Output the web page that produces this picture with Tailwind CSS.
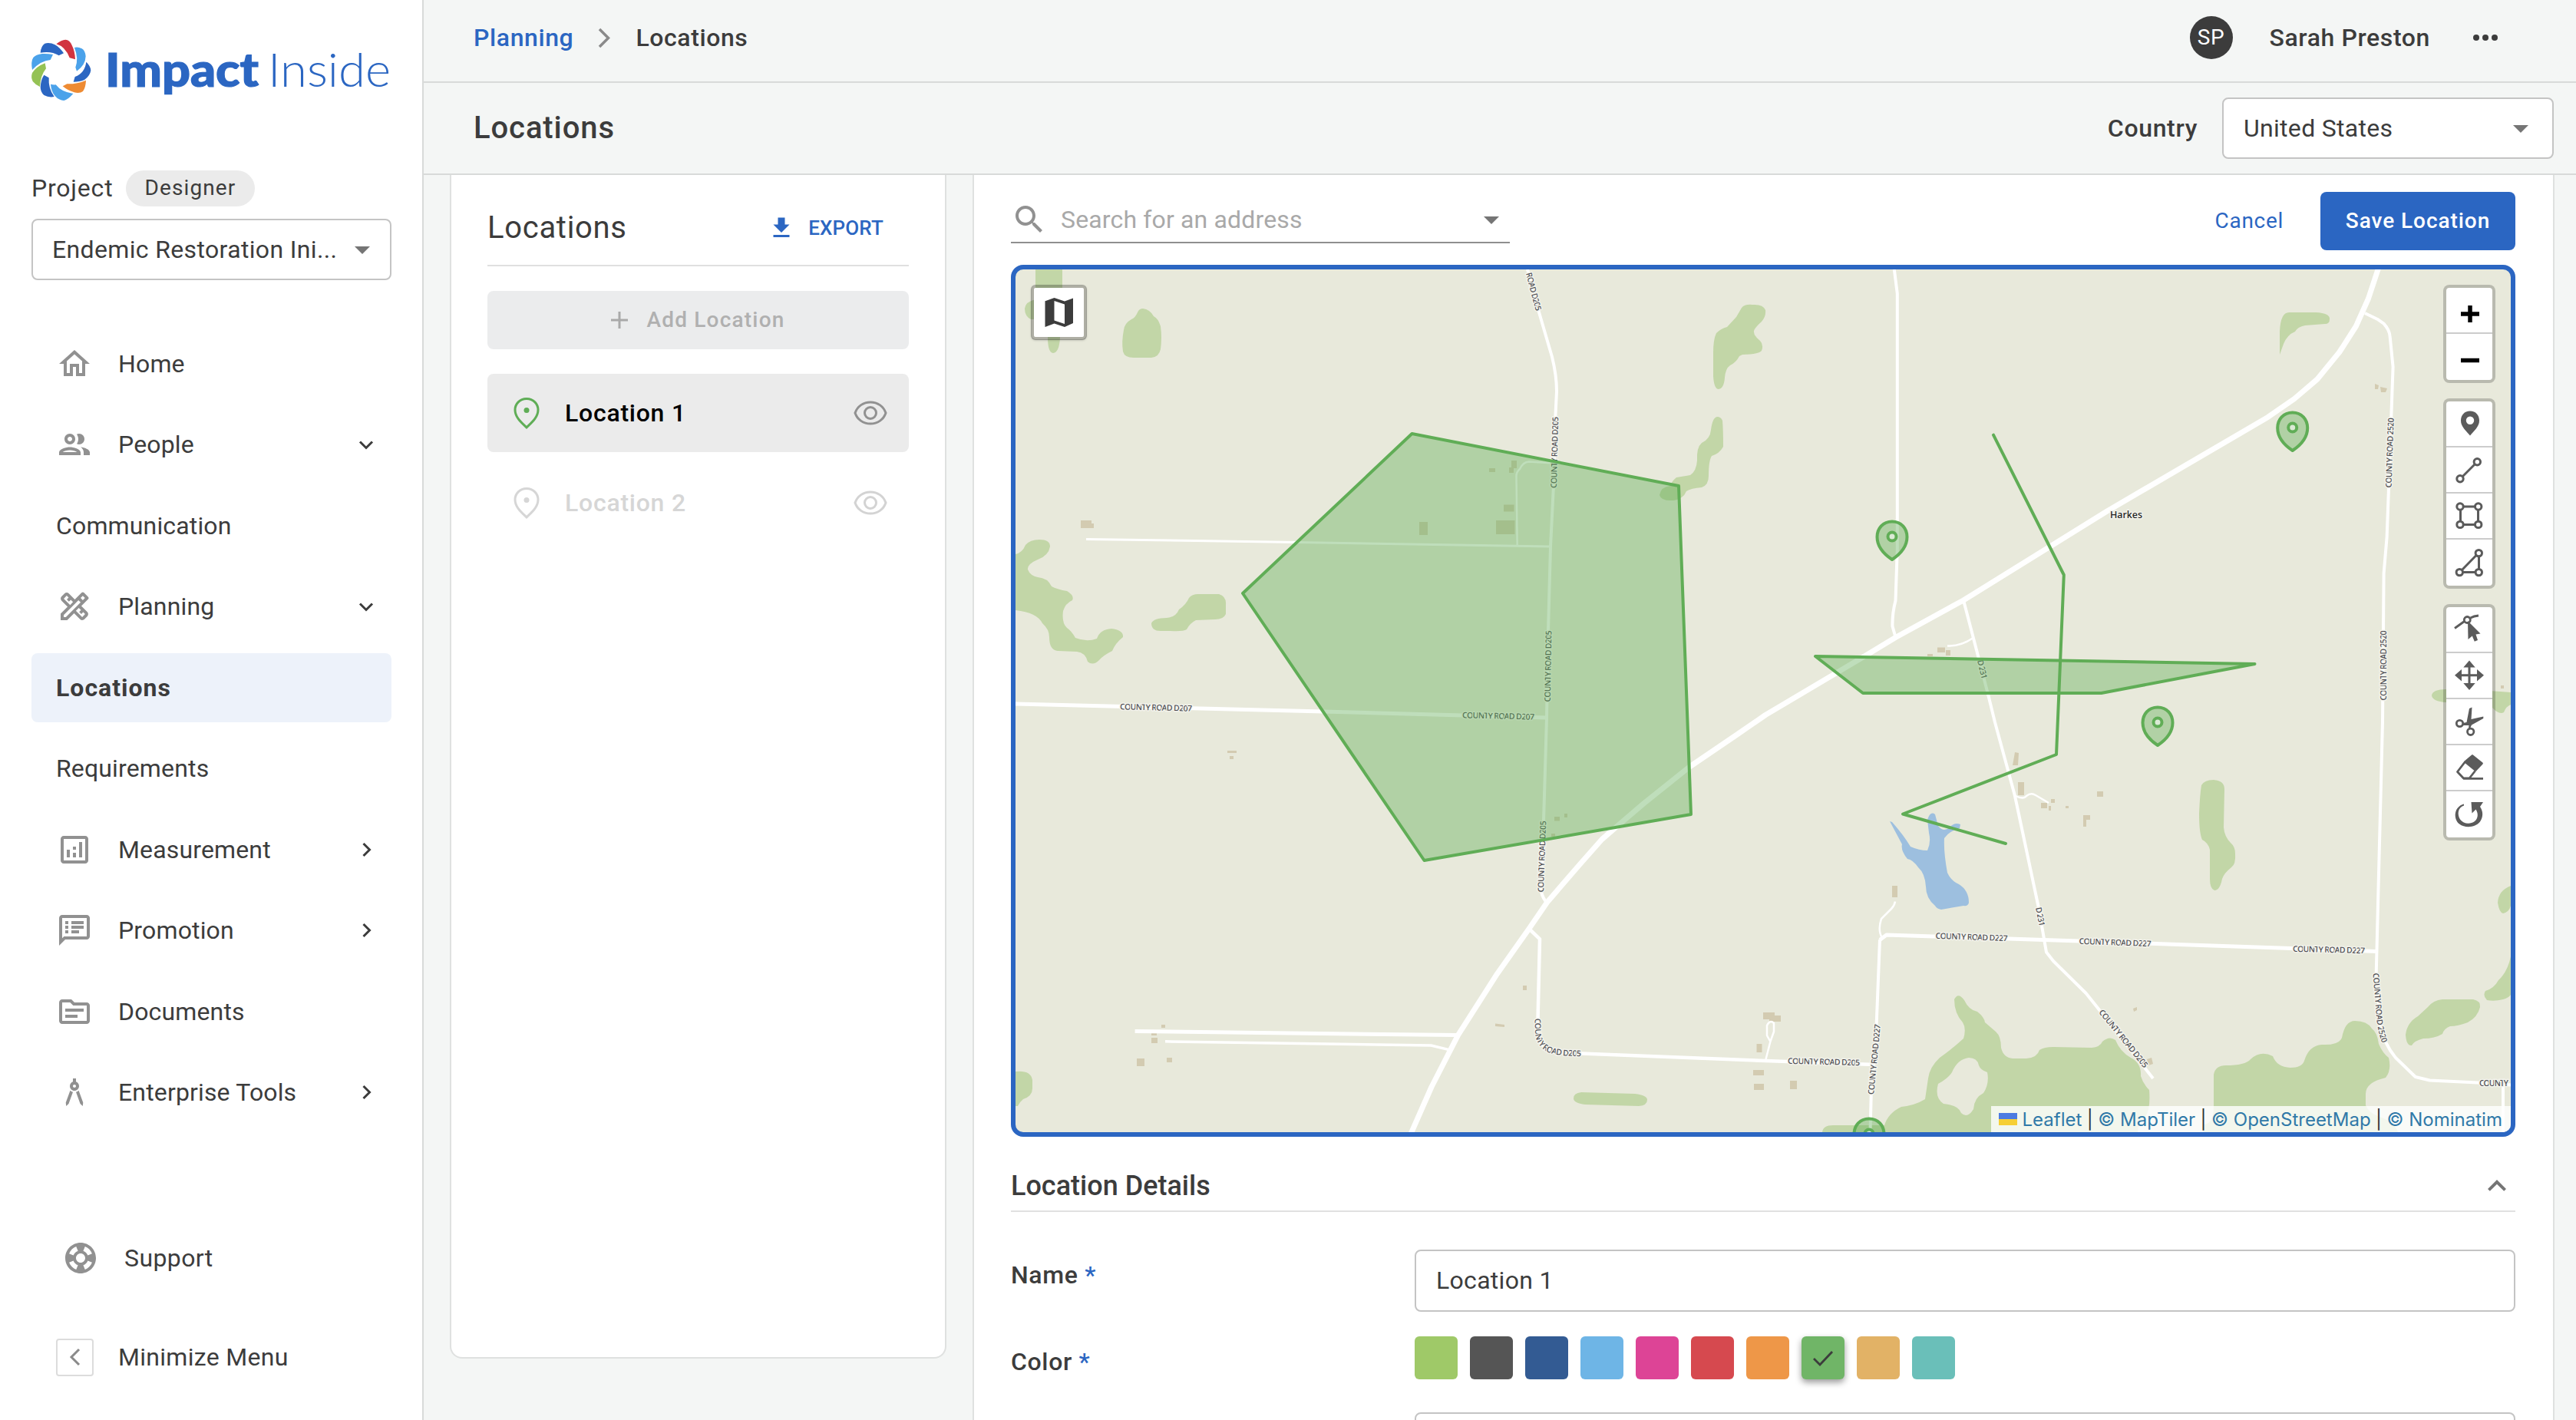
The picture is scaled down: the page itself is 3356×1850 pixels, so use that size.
<!DOCTYPE html>
<html lang="en">
<head>
<meta charset="utf-8">
<title>Locations</title>
<script src="https://cdn.jsdelivr.net/npm/@tailwindcss/browser@4"></script>
</head>
<body class="bg-white">
<div class="flex w-[3356px] h-[1850px] overflow-hidden font-['Roboto',sans-serif] text-[32px] leading-none tracking-[0.15px] text-[#3c3c3c]">

  <!-- Sidebar -->
  <aside class="w-[552px] h-full shrink-0 border-r-2 border-[#d8dad9] bg-white pl-[41px] pr-[40px] flex flex-col">
    <svg class="mt-[40px] h-[100px] w-[469px] shrink-0 overflow-visible tracking-normal" viewBox="41 40 469 100">
      <g transform="translate(30 40) scale(.33333)">
        <path fill="#d1343f" d="M130 52Q150 36 166 35Q182 36 190 55Q203 80 204 112L182 106Q165 62 130 52Z"/>
        <path fill="#4ba2ea" d="M201 66Q214 62 230 70Q243 78 245 100Q244 135 210 158L205 143Q218 110 201 66Z"/>
        <path fill="#2b66c2" d="M247 122Q264 138 265 155Q262 176 240 192Q222 200 197 200L203 180Q242 165 247 122Z"/>
        <path fill="#ee8b33" d="M155 217L172 208Q210 209 246 194Q245 222 234 237Q222 246 200 241Q175 234 155 217Z"/>
        <path fill="#4ba2ea" d="M108 209Q118 212 128 211Q150 240 196 246Q175 270 160 273Q140 272 125 255Q110 238 108 209Z"/>
        <path fill="#2b66c2" d="M82 173L101 184Q98 225 122 258Q100 262 82 252Q68 240 68 220Q70 190 82 173Z"/>
        <path fill="#95c255" d="M86 127L90 148Q68 175 66 219Q50 213 38 198Q30 182 36 165Q52 140 86 127Z"/>
        <path fill="#4ba2ea" d="M117 93L107 114Q70 117 36 153Q30 120 40 105Q50 93 75 90Q95 89 117 93Z"/>
        <path fill="#2b66c2" d="M68 86Q70 60 85 50Q105 45 125 55Q142 64 159 88L140 97Q110 78 68 86Z"/>
      </g>
      <text x="137" y="113" font-family="Lato" font-weight="900" font-size="61" fill="#2b66c2" stroke="#2b66c2" stroke-width="1.200" textLength="200" lengthAdjust="spacingAndGlyphs">Impact</text>
      <text x="349" y="113" font-family="Lato" font-weight="300" font-size="61" fill="#2b66c2" textLength="160" lengthAdjust="spacingAndGlyphs">Inside</text>
    </svg>

    <div class="mt-[81px] h-[48px] flex items-center shrink-0">
      <span class="w-[123px] tracking-[0.8px]">Project</span>
      <span class="h-[47px] w-[168px] rounded-full bg-[#ebebeb] flex items-center justify-center text-[28px] tracking-[1.1px]">Designer</span>
    </div>
    <div class="mt-[16px] h-[80px] shrink-0 border-2 border-[#c4c4c4] rounded-[8px] flex items-center justify-between pl-[25px] pr-[12px]">
      <span class="tracking-[0.35px]">Endemic Restoration Ini...</span>
      <svg class="size-12" viewBox="0 0 24 24" fill="#757575"><path d="M7 10l5 5 5-5z"/></svg>
    </div>

    <nav class="mt-[64px] flex flex-col gap-4 shrink-0">
      <a class="h-[89.5px] flex items-center pl-8 pr-[9px]"><svg class="size-12 mr-[33px]" viewBox="0 0 24 24" fill="#919191"><path d="M12 5.69l5 4.5V18h-2v-6H9v6H7v-7.81l5-4.5M12 3L2 12h3v8h6v-6h2v6h6v-8h3L12 3z"/></svg><span class="grow">Home</span></a>
      <a class="h-[89.5px] flex items-center pl-8 pr-[9px]"><svg class="size-12 mr-[33px]" viewBox="0 0 24 24" fill="#919191"><path d="M9 13.75c-2.34 0-7 1.17-7 3.5V19h14v-1.75c0-2.33-4.66-3.5-7-3.5zM4.34 17c.84-.58 2.87-1.25 4.66-1.25s3.82.67 4.66 1.25H4.34zM9 12c1.93 0 3.5-1.57 3.5-3.5S10.93 5 9 5 5.500 6.570 5.500 8.500 7.070 12 9 12zm0-5c.83 0 1.500.67 1.500 1.500S9.830 10 9 10s-1.500-.67-1.500-1.500S8.170 7 9 7zm7.040 6.810c1.160.84 1.960 1.960 1.960 3.440V19h4v-1.750c0-2.020-3.500-3.170-5.960-3.440zM15 12c1.930 0 3.500-1.570 3.500-3.500S16.930 5 15 5c-.54 0-1.040.13-1.500.35.63.89 1 1.980 1 3.150s-.37 2.260-1 3.150c.46.22.96.35 1.500.35z"/></svg><span class="grow">People</span><svg class="size-[48px]" viewBox="0 0 48 48" fill="none" stroke="#3c3c3c" stroke-width="3"><path d="M16 20.500l8 8 8-8"/></svg></a>
      <a class="h-[89.5px] flex items-center pl-8"><span>Communication</span></a>
      <a class="h-[89.5px] flex items-center pl-8 pr-[9px]"><svg class="size-12 mr-[33px]" viewBox="0 0 24 24" fill="#919191"><path d="M20.970 7.270c.39-.39.39-1.020 0-1.410l-2.830-2.830c-.39-.39-1.020-.39-1.410 0l-4.490 4.490-3.890-3.890c-.78-.78-2.050-.78-2.830 0l-1.900 1.900c-.78.78-.78 2.050 0 2.830l3.890 3.890L3 16.760V21h4.240l4.520-4.520 3.890 3.890c.95.95 2.230.6 2.830 0l1.900-1.900c.78-.78.78-2.050 0-2.830l-3.890-3.890 4.480-4.480zM5.040 6.940l1.890-1.900L8.200 6.310 7.020 7.500l1.410 1.410 1.190-1.190 1.450 1.450-1.900 1.900-4.130-4.130zm11.230 7.440l-1.190 1.190 1.410 1.410 1.190-1.190 1.270 1.270-1.900 1.900-4.120-4.120 1.900-1.900 1.440 1.440zM6.410 19H5v-1.410l9.610-9.610 1.410 1.410L6.410 19zm11.020-11.030l-1.410-1.410 1.410-1.410 1.410 1.410-1.410 1.410z"/></svg><span class="grow">Planning</span><svg class="size-[48px]" viewBox="0 0 48 48" fill="none" stroke="#3c3c3c" stroke-width="3"><path d="M16 20.500l8 8 8-8"/></svg></a>
      <a class="h-[89.5px] flex items-center pl-8 rounded-[8px] bg-[#edf2fa] font-bold tracking-[1px]"><span>Locations</span></a>
      <a class="h-[89.5px] flex items-center pl-8"><span>Requirements</span></a>
      <a class="h-[89.5px] flex items-center pl-8 pr-[9px]"><svg class="size-12 mr-[33px]" viewBox="0 0 24 24" fill="#919191"><path d="M19 3H5c-1.100 0-2 .9-2 2v14c0 1.100.9 2 2 2h14c1.100 0 2-.9 2-2V5c0-1.100-.9-2-2-2zm0 16H5V5h14v14zM7 12h2v5H7zM15 7h2v10h-2zM11 14h2v3h-2zM11 10h2v2h-2z"/></svg><span class="grow">Measurement</span><svg class="size-[48px]" viewBox="0 0 48 48" fill="none" stroke="#3c3c3c" stroke-width="3"><path d="M20.500 16l8 8-8 8"/></svg></a>
      <a class="h-[89.5px] flex items-center pl-8 pr-[9px]"><svg class="size-12 mr-[33px]" viewBox="0 0 24 24" fill="#919191"><path d="M20 2H4c-1.100 0-1.990.9-1.990 2L2 22l4-4h14c1.100 0 2-.9 2-2V4c0-1.100-.9-2-2-2zm0 14H5.170l-.59.590-.58.580V4h16v12zM6 12h2v2H6zM6 9h2v2H6zM6 6h2v2H6zM10 12h5v2h-5zM10 9h8v2h-8zM10 6h8v2h-8z"/></svg><span class="grow">Promotion</span><svg class="size-[48px]" viewBox="0 0 48 48" fill="none" stroke="#3c3c3c" stroke-width="3"><path d="M20.500 16l8 8-8 8"/></svg></a>
      <a class="h-[89.5px] flex items-center pl-8"><svg class="size-12 mr-[33px]" viewBox="0 0 24 24" fill="#919191"><path d="M20 6h-8l-2-2H4c-1.100 0-1.990.9-1.990 2L2 18c0 1.100.9 2 2 2h16c1.100 0 2-.9 2-2V8c0-1.100-.9-2-2-2zm0 12H4V6h5.170l2 2H20v10zM18 12H6v-2h12v2zM14 16H6v-2h8v2z"/></svg><span>Documents</span></a>
      <a class="h-[89.5px] flex items-center pl-8 pr-[9px]"><svg class="size-12 mr-[33px]" viewBox="0 0 24 24" fill="#919191"><path d="M6.360 18.780L6.610 21l1.620-1.540 2.770-7.600c-.68-.17-1.280-.51-1.770-.98l-2.870 7.900zM14.770 10.880c-.49.47-1.100.81-1.770.98l2.770 7.600L17.390 21l.25-2.220-2.870-7.900zM15 8c0-1.300-.84-2.400-2-2.820V3h-2v2.180C9.840 5.600 9 6.700 9 8c0 1.660 1.340 3 3 3s3-1.340 3-3zm-3 1c-.55 0-1-.45-1-1s.45-1 1-1 1 .45 1 1-.45 1-1 1z"/></svg><span class="grow">Enterprise Tools</span><svg class="size-[48px]" viewBox="0 0 48 48" fill="none" stroke="#3c3c3c" stroke-width="3"><path d="M20.500 16l8 8-8 8"/></svg></a>
    </nav>

    <div class="mt-[141px] h-[60px] flex items-center shrink-0 pl-[40px]">
      <svg class="size-12 mr-[33px]" viewBox="0 0 24 24" fill="#919191"><path d="M12 2C6.480 2 2 6.480 2 12s4.480 10 10 10 10-4.480 10-10S17.520 2 12 2zm7.460 7.120l-2.780 1.150c-.51-1.360-1.580-2.440-2.950-2.940l1.150-2.780c2.100.8 3.770 2.470 4.580 4.570zM12 15c-1.660 0-3-1.340-3-3s1.340-3 3-3 3 1.340 3 3-1.340 3-3 3zM9.130 4.540l1.170 2.780c-1.380.5-2.470 1.590-2.980 2.970L4.540 9.130c.81-2.110 2.480-3.780 4.590-4.590zM4.540 14.870l2.780-1.150c.51 1.380 1.590 2.460 2.970 2.960l-1.170 2.780c-2.100-.81-3.770-2.480-4.580-4.590zm10.340 4.590l-1.150-2.780c1.370-.51 2.450-1.590 2.950-2.970l2.780 1.170c-.81 2.100-2.480 3.770-4.580 4.580z"/></svg>
      <span class="tracking-[0.4px]">Support</span>
    </div>
    <div class="mt-[69px] h-[60px] flex items-center shrink-0 pl-[32px]">
      <span class="size-[49px] border-2 border-[#dcdcdc] rounded-[4px] flex items-center justify-center mr-[32px]"><svg class="size-[40px]" viewBox="0 0 40 40" fill="none" stroke="#8a8a8a" stroke-width="3"><path d="M25 10l-10 10 10 10"/></svg></span>
      <span class="tracking-[0.3px]">Minimize Menu</span>
    </div>
  </aside>

  <main class="grow h-full bg-[#f4f6f5] flex flex-col">
    <!-- Top bar -->
    <header class="h-[108px] shrink-0 border-b-2 border-[#d8dad9] flex items-center justify-between pl-[65px] pr-[93px] pb-[8px] font-medium tracking-[0.6px]">
      <div class="flex items-center">
        <span class="text-[#2b66c2]">Planning</span>
        <svg class="w-[36px] h-[48px] ml-[23px] mr-[22px]" viewBox="0 0 36 48" fill="none" stroke="#8a8a8a" stroke-width="3.500"><path d="M11 13l11.500 11.500L11 36"/></svg>
        <span>Locations</span>
      </div>
      <div class="flex items-center">
        <span class="size-[56px] rounded-full bg-[#3c3c3c] text-white text-[28px] font-normal flex items-center justify-center mr-[48px]">SP</span>
        <span class="mr-[43px]">Sarah Preston</span>
        <svg class="w-[54px] h-[10px]" viewBox="-10 0 54 10" fill="#3c3c3c"><circle cx="7" cy="5" r="4"/><circle cx="19" cy="5" r="4"/><circle cx="31" cy="5" r="4"/></svg>
      </div>
    </header>

    <div class="h-[120px] shrink-0 border-b-2 border-[#d8dad9] flex items-center justify-between pl-[65px] pr-[29px] font-medium">
      <h1 class="text-[40px] tracking-[0.9px]">Locations</h1>
      <div class="flex items-center">
        <span class="mr-[32px] tracking-[0.65px]">Country</span>
        <div class="w-[432px] h-[80px] rounded-[8px] border-2 border-[#c4c4c4] bg-white flex items-center justify-between pl-[26px] pr-[17px] font-normal">
          <span class="tracking-[0.3px]">United States</span>
          <svg class="size-12" viewBox="0 0 24 24" fill="#757575"><path d="M7 10l5 5 5-5z"/></svg>
        </div>
      </div>
    </div>

    <div class="grow flex items-start pl-[34px] gap-[34px] overflow-hidden">
      <!-- Location list -->
      <section class="w-[647px] h-[1542px] shrink-0 border-2 border-t-0 border-[#dfe1e0] rounded-b-[16px] bg-white px-[47px]">
        <div class="h-[119px] border-b-2 border-[#e0e0e0] pt-[20px] flex items-center justify-between pr-[33px]">
          <h2 class="text-[40px] font-[450] tracking-[0.7px]">Locations</h2>
          <span class="flex items-center text-[26px] font-medium text-[#2b66c2] gap-[17px]"><svg class="size-9" viewBox="0 0 24 24" fill="#2b66c2"><path d="M5 20h14v-2H5v2zM19 9h-4V3H9v6H5l7 7 7-7z"/></svg><span>EXPORT</span></span>
        </div>
        <button class="mt-[32px] h-[76px] w-full rounded-[8px] bg-[#ebeced] text-[#b0b0b0] text-[28px] font-medium flex items-center justify-center tracking-[1.2px]">
          <svg class="size-[22px] mr-[24px]" viewBox="0 0 22 22" stroke="#a9a9a9" stroke-width="3"><path d="M11 0v22M0 11h22"/></svg>Add Location
        </button>
        <div class="mt-[32px] h-[102px] rounded-[8px] bg-[#ebebeb] text-black font-medium flex items-center pl-[27px] pr-[26px]">
          <svg class="size-12 mr-[26px]" viewBox="0 0 48 48" fill="none" stroke="#5fad56" stroke-width="3"><path d="M24 5.500C15 5.500 9 12.300 9 20c0 10 9 17 15 23 6-6 15-13 15-23 0-7.700-6-14.500-15-14.500z"/><circle cx="24" cy="20.500" r="3.500" fill="#5fad56" stroke="none"/></svg>
          <span class="grow tracking-[0.75px]">Location 1</span>
          <svg class="size-12" viewBox="0 0 48 48" fill="none" stroke="#919191" stroke-width="3"><path d="M4 24C7 15 15 10 24 10S41 15 44 24C41 33 33 38 24 38S7 33 4 24Z"/><circle cx="24" cy="24" r="7.500"/></svg>
        </div>
        <div class="mt-[15px] h-[102px] text-[#d6d6d6] font-medium flex items-center pl-[27px] pr-[26px]">
          <svg class="size-12 mr-[26px]" viewBox="0 0 48 48" fill="none" stroke="#d6d6d6" stroke-width="3"><path d="M24 5.500C15 5.500 9 12.300 9 20c0 10 9 17 15 23 6-6 15-13 15-23 0-7.700-6-14.500-15-14.500z"/><circle cx="24" cy="20.500" r="3.500" fill="#d6d6d6" stroke="none"/></svg>
          <span class="grow tracking-[0.75px]">Location 2</span>
          <svg class="size-12" viewBox="0 0 48 48" fill="none" stroke="#d3d3d3" stroke-width="3"><path d="M4 24C7 15 15 10 24 10S41 15 44 24C41 33 33 38 24 38S7 33 4 24Z"/><circle cx="24" cy="24" r="7.500"/></svg>
        </div>
      </section>

      <!-- Editor -->
      <section class="w-[2061px] h-[1700px] shrink-0 border-x-2 border-[#dfe1e0] bg-white pl-[48px] pr-[49px]">
        <div class="h-[117px] flex items-start justify-between">
          <div class="mt-[28px] w-[650px] h-[61px] border-b-2 border-[#8f8f8f] flex items-center">
            <svg class="size-12 mr-[17px]" viewBox="0 0 24 24" fill="#919191"><path d="M15.500 14h-.79l-.28-.27C15.410 12.590 16 11.110 16 9.500 16 5.910 13.090 3 9.500 3S3 5.910 3 9.500 5.910 16 9.500 16c1.610 0 3.090-.59 4.230-1.570l.27.28v.79l5 4.990L20.490 19l-4.990-5zm-6 0C7.010 14 5 11.990 5 9.500S7.010 5 9.500 5 14 7.010 14 9.500 11.990 14 9.500 14z"/></svg>
            <span class="grow text-[#a9a9a9]">Search for an address</span>
            <svg class="size-12" viewBox="0 0 24 24" fill="#757575"><path d="M7 10l5 5 5-5z"/></svg>
          </div>
          <div class="mt-[22px] flex items-center">
            <span class="text-[28px] text-[#2b66c2] mr-[48px] tracking-[0.7px]">Cancel</span>
            <button class="w-[254px] h-[76px] rounded-[8px] bg-[#2b66c2] text-white text-[28px] font-medium tracking-[0.95px]">Save Location</button>
          </div>
        </div>

        <div class="relative h-[1136px] w-[1960px] rounded-[16px] border-[6px] border-[#2b66c2] overflow-hidden bg-[#e8e9db]">
          <svg class="block w-[1948px] h-[1124px] tracking-normal" viewBox="1323 351 1948 1124">
            <!-- woodland -->
            <g fill="#c2d6a7">
              <path d="M1349 351H1384V380L1381 440Q1380 459 1372 460Q1365 459 1365 440V416H1343Q1335 412 1335 402Q1336 393 1349 390Z"/>
              <path d="M1489 402Q1484 402 1482 407Q1479 414 1474 416Q1465 421 1464 430Q1461 445 1463 458Q1465 466 1477 466H1500Q1510 465 1512 455Q1514 440 1512 425Q1509 415 1503 412Q1498 403 1489 402Z"/>
              <path d="M2283 397Q2273 396 2269 401L2262 413L2250 426Q2242 428 2236 434Q2232 442 2232 460V490Q2233 507 2239 507Q2246 506 2247 492Q2248 480 2254 476Q2262 472 2266 464L2270 462Q2290 462 2295 457Q2298 449 2293 444Q2284 437 2285 431Q2287 426 2295 419Q2301 412 2300 404Q2297 396 2283 397Z"/>
              <path d="M2237 543Q2231 544 2229 560Q2228 572 2217 577Q2210 583 2211 600Q2210 614 2202 619Q2190 621 2184 622Q2177 628 2176 633Q2164 634 2162 645Q2164 653 2180 652Q2193 650 2197 640Q2203 636 2217 635Q2226 632 2226 620Q2226 600 2230 594Q2240 591 2245 582Q2245 560 2244 548Q2242 543 2237 543Z"/>
              <path d="M1323 722Q1332 720 1336 710Q1342 703 1354 703Q1368 703 1368 712Q1366 724 1352 729Q1338 735 1339 742Q1342 750 1352 752Q1365 753 1370 764Q1378 768 1390 770Q1400 776 1397 782Q1388 786 1385 796Q1383 812 1390 818Q1396 822 1401 831Q1416 837 1429 832Q1433 820 1448 819Q1464 821 1463 830Q1453 838 1449 848Q1437 854 1432 860Q1424 868 1417 862Q1414 850 1403 849L1378 848Q1367 847 1367 830Q1367 820 1358 812Q1351 798 1323 795Z"/>
              <path d="M1561 774H1588Q1598 777 1597 788V800Q1594 807 1583 807L1558 808Q1550 812 1546 820Q1541 823 1525 822H1512Q1500 822 1500 812Q1503 805 1520 805Q1532 804 1536 794Q1545 788 1549 779Q1553 774 1561 774Z"/>
              <path d="M1323 1396Q1343 1394 1345 1407V1418Q1345 1428 1333 1432Q1328 1436 1326 1441H1323Z"/>
              <path d="M2060 1423L2130 1425Q2146 1427 2146 1433Q2146 1440 2135 1441L2065 1439Q2050 1437 2050 1431Q2050 1424 2060 1423Z"/>
              <path d="M2970 462V432Q2971 406 2983 407H3017Q3036 408 3035 416Q3035 422 3029 422L3003 424Q2993 426 2990 432Q2980 436 2975 448Z"/>
              <path d="M2884 1016Q2898 1017 2898 1028L2897 1078Q2898 1090 2906 1098Q2912 1103 2912 1112Q2913 1126 2907 1130Q2897 1138 2895 1145Q2892 1160 2885 1160Q2879 1158 2879 1145V1107Q2877 1098 2869 1094Q2865 1085 2865 1060Q2866 1035 2868 1023Q2872 1016 2884 1016Z"/>
              <path d="M3187 898Q3169 898 3168 906Q3169 914 3187 915L3246 921Q3256 932 3262 928Q3265 920 3271 918V902L3230 899Z"/>
              <path d="M3271 1154Q3255 1160 3254 1176Q3256 1189 3261 1190Q3269 1188 3271 1180Z"/>
              <path d="M3271 1246Q3267 1266 3255 1277Q3249 1288 3238 1291Q3234 1297 3240 1303Q3250 1305 3261 1302Q3268 1300 3271 1296Z"/>
              <path d="M3182 1302H3222Q3232 1304 3231 1312Q3228 1325 3215 1332Q3202 1337 3192 1337Q3184 1340 3182 1347Q3172 1353 3157 1353Q3145 1356 3142 1362Q3135 1363 3134 1348Q3136 1332 3150 1324L3163 1312Q3170 1303 3182 1302Z"/>
              <path fill-rule="evenodd" d="M2374 1475Q2375 1466 2388 1466H2412L2455 1466Q2460 1450 2477 1442Q2495 1440 2508 1432L2512 1405Q2514 1390 2527 1378Q2545 1365 2558 1353Q2562 1340 2557 1332Q2546 1320 2546 1302Q2551 1292 2559 1303Q2565 1316 2576 1318Q2585 1325 2586 1332L2600 1344Q2607 1350 2607 1365Q2610 1378 2622 1379H2640Q2654 1378 2657 1368Q2663 1364 2675 1364L2725 1365Q2736 1364 2739 1357Q2748 1349 2756 1355Q2762 1370 2776 1378Q2790 1385 2789 1402Q2792 1412 2800 1420Q2802 1445 2795 1455Q2786 1458 2785 1475ZM2565 1378Q2576 1378 2578 1388Q2580 1394 2589 1397Q2592 1412 2584 1424Q2572 1430 2571 1445Q2563 1458 2555 1450Q2552 1440 2532 1438Q2520 1430 2525 1412Q2538 1405 2543 1397Q2550 1380 2565 1378Z"/>
              <path d="M2870 1475V1465Q2884 1465 2884 1441V1400Q2886 1388 2900 1388Q2925 1388 2932 1380Q2945 1368 2961 1376Q2966 1390 2984 1391Q2999 1391 3002 1382Q3008 1362 3025 1361Q3047 1362 3051 1352Q3055 1330 3068 1330Q3084 1330 3090 1340Q3097 1345 3099 1360Q3104 1372 3112 1378Q3116 1394 3108 1404Q3082 1410 3082 1425V1440Q3086 1450 3100 1455Q3120 1462 3124 1475Z"/>
            </g>
            <path fill="#9dbfdf" d="M2462 1070L2465 1071Q2480 1088 2489 1103Q2500 1108 2511 1108Q2516 1098 2513 1085L2511 1068Q2515 1056 2521 1061L2525 1076Q2532 1085 2540 1078Q2546 1071 2554 1074L2553 1079Q2540 1082 2533 1092Q2532 1110 2537 1137Q2542 1148 2552 1152Q2565 1160 2565 1176Q2564 1181 2558 1180L2529 1185Q2523 1184 2521 1180Q2509 1170 2509 1155Q2508 1138 2499 1130Q2492 1120 2485 1119Q2476 1108 2478 1100Q2470 1085 2462 1070Z"/>
            <!-- buildings -->
            <g fill="#d3cbb1">
              <path d="M1408 678h14v4h3v6h-17zM1940 610h8v5h-8zM1969 600h7v10h-4v6h-6v-7h3zM1959 657.500h13.500v9H1959zM1849 680h11v17h-11zM1949 678h24.500v18H1949zM1599 978h12v3h-12zM1602 985h5v4h-5zM2025 1064h7v5.500h-7zM2038 1060h4v5h-4zM2021 1086h5v4h-5zM1984 1284h5v6h-5zM1948 1333.500l12 1.500v3l-12-1zM1513 1335h5v4h-5zM1500 1344h7v5h-7zM1500 1352h8v7h-8zM1481 1379h10v10h-10zM1520 1378h7v6h-7zM2297 1319h15v4h8v8h-15v-3h-8zM2288.500 1360h7v11h-7zM2284 1394h14v7h-14zM2285 1412h13v8h-13zM2332 1408h9v11h-9zM2465 1154h7v15h-7zM2625 980l5 1-1 16h-7zM2629 1019h8v17h-8zM2659 1046h8v7h-8zM2672 1041h5v5h-5zM2669 1050h3v6h-3zM2691 1050h4v3h-4zM2732 1031h8v7h-8zM2714 1062h9v6h-5v9h-4zM2779 1314l5-2v4l-4 2zM2797 1380l6-2 2 8-6 2zM3094 500l5 2-1 5h-4zM3101 504l9 2-2 5h-6zM2524 843.500h10v6.500h-10zM2535 847h6v7h-6zM2511 852h7v3h-7zM3258 893h4v4h-4z"/>
            </g>
            <!-- roads -->
            <g fill="none" stroke="#fff" stroke-linejoin="round">
              <path stroke-width="3" d="M1415 702.500L1689 706.500 2019 712"/>
              <path stroke-width="2.500" d="M1976.700 711L1975.500 622Q1975 615 1980 611 1984 602 1992 601.500L2025 603.500M2570.600 831Q2555 842 2537 841.500M2626 1037Q2636 1042 2640 1037 2646 1032 2652 1036L2669 1046M2469 1174.500Q2468 1180 2464 1184L2451 1197Q2446 1212 2452 1222M2300.500 1380L2306.400 1357 2311 1344V1333Q2306 1328 2302 1336V1349L2306.400 1357"/>
              <path stroke-width="4" d="M1990 351L2004.700 405.700 2022 465Q2028 489 2028 510L2026.400 542 2024 632 2020 712 2017 822 2015 935 2011 1070 2008 1162Q2010 1171 2015.600 1176"/>
              <path stroke-width="5" d="M1323 917L1724 927 2015 935M1478.600 1343.500L1899.500 1348.600"/>
              <path stroke-width="3.500" d="M1518 1356.800L1864.400 1362 1886.700 1367.400"/>
              <path stroke-width="4.500" d="M1992 1210L2006 1223.400 2003.500 1329Q2003 1352 2006 1357 2015 1371 2035 1371.500L2300 1382 2442.400 1387"/>
              <path stroke-width="4" d="M2467.800 351L2471.800 382.500V715L2469.500 782.600Q2465 800 2465.500 816L2469.500 830M2558 782L2570.600 830 2590 904.400 2599 941 2624.800 1036 2656 1183 2666 1240.600 2675 1252 2717.600 1294 2737.600 1319 2805 1405"/>
              <path stroke-width="4" d="M3081 408L3097 415.700 3105.600 421.600Q3113 430 3113.600 438L3117.600 478 3115.300 543 3112 636 3109.600 700 3105.600 747 3105 822 3104 940 3095.700 1269 3101 1336Q3106 1360 3121 1378L3146.800 1403 3165.400 1407.500 3228 1410.500 3271 1413.500M3261 1413V1475"/>
              <path stroke-width="5" d="M3095.700 1239.400L2709 1226 2457.700 1218 2449 1224.500"/>
              <path stroke-width="4" d="M2449 1224L2443.700 1359 2437.800 1424 2436.500 1475"/>
              <path stroke-width="7" d="M1836 1482L1839 1475 1865 1416 1899.500 1348.600 1950.500 1268.700 1992 1210 2015.600 1175.600Q2050 1135 2087 1093.500L2106.800 1076.400 2141.800 1046.500 2200.500 999.500 2263 957 2300 931.500 2429 855 2469.500 830.500 2558 782 2745 666 2954.600 543.400 2989 519.700 3019 494 3047.600 459 3069.400 425 3085.500 389 3100 345"/>
            </g>
            <!-- road labels -->
            <g font-family="'Noto Sans','Open Sans',sans-serif" font-size="10.500" font-weight="500" fill="#4c4c52" stroke="#f3f3ec" stroke-width="3" paint-order="stroke" stroke-linejoin="round" text-anchor="middle">
              <defs>
                <path id="r205" d="M1999.500 1327L2000 1345Q2001 1360 2012 1368 2020 1374 2040 1375.500L2075 1377"/>
                <path id="r205d" d="M2734 1319L2800 1400"/>
                <path id="r2520" d="M3091.500 1268L3096.500 1330Q3099 1350 3106 1364L3112 1374"/>
              </defs>
              <text transform="translate(1506 925.500) rotate(1.500)" textLength="94">COUNTY ROAD D207</text>
              <text transform="translate(1952 936.500) rotate(1.500)" textLength="94">COUNTY ROAD D207</text>
              <text transform="translate(2029 589.500) rotate(-88.500)" textLength="93">COUNTY ROAD D205</text>
              <text transform="translate(2020.500 868) rotate(-89)" textLength="93">COUNTY ROAD D205</text>
              <text transform="translate(2012.500 1116) rotate(-88)" textLength="93">COUNTY ROAD D205</text>
              <text transform="translate(1994.500 381) rotate(75)" textLength="51">ROAD D205</text>
              <text text-anchor="start" textLength="94"><textPath href="#r205">COUNTY ROAD D205</textPath></text>
              <text transform="translate(2376 1387) rotate(1.500)" textLength="94">COUNTY ROAD D205</text>
              <text transform="translate(2445.500 1380.500) rotate(-84.500)" textLength="92">COUNTY ROAD D227</text>
              <text transform="translate(2568.500 1224.500) rotate(2)" textLength="94">COUNTY ROAD D227</text>
              <text transform="translate(2755.500 1231.500) rotate(2)" textLength="94">COUNTY ROAD D227</text>
              <text transform="translate(3034 1241) rotate(1.500)" textLength="94">COUNTY ROAD D227</text>
              <text transform="translate(2654.500 1195) rotate(79)" textLength="25">D 231</text>
              <text transform="translate(2579 873) rotate(76)" textLength="25">D 231</text>
              <text transform="translate(3117 590) rotate(-88)" textLength="91">COUNTY ROAD 2520</text>
              <text transform="translate(3108.500 867) rotate(-90)" textLength="91">COUNTY ROAD 2520</text>
              <text text-anchor="start" textLength="92"><textPath href="#r2520">COUNTY ROAD 2520</textPath></text>
              <text text-anchor="start" textLength="94"><textPath href="#r205d">COUNTY ROAD D205</textPath></text>
              <text x="3249" y="1415" textLength="38">COUNTY</text>
              <text x="2770" y="675" font-size="13" fill="#222" textLength="42" lengthAdjust="spacingAndGlyphs">Harkes</text>
            </g>
            <!-- drawn shapes -->
            <g stroke="#60ad56" stroke-width="4" stroke-linejoin="round" stroke-linecap="round" fill="#60ad56" fill-opacity=".4">
              <path d="M1839.500 565L2187 633 2203 1061 1855.500 1121 1619 773Z"/>
              <path d="M2365 855L2937.500 865 2737.600 903H2427Z"/>
              <path fill="none" d="M2597 566.700L2688.800 749 2679 983 2479 1060.500 2613 1099"/>
              <g id="pin"><path d="M2465 679.500C2453 679.500 2445.500 688.500 2445.500 699.500C2445.500 713 2456 723 2465 729C2474 723 2484.500 713 2484.500 699.500C2484.500 688.500 2477 679.500 2465 679.500Z"/><circle cx="2465" cy="699" r="5.500" fill="#fff" fill-opacity=".55"/></g>
              <use href="#pin" x="521.700" y="-142"/>
              <use href="#pin" x="346" y="242"/>
              <use href="#pin" x="-30" y="778"/>
            </g>
          </svg>

          <div class="absolute left-[20px] top-[20px] w-[73px] h-[72px] rounded-[6px] border-4 border-black/25 bg-white bg-clip-padding shadow-sm flex items-center justify-center">
            <svg class="size-[48px]" viewBox="0 0 48 48"><path fill="#3c3c3c" d="M5 9.500L17.500 5 31 9.500 42 5.500V38L31 43 17.500 38.500 5.500 43V9.500ZM17.500 9V34.500L31 39V13.500Z" fill-rule="evenodd"/></svg>
          </div>

          <div class="absolute right-[20px] top-[20px] flex flex-col gap-5">
            <div class="w-[68px] rounded-[8px] border-4 border-black/20 bg-white bg-clip-padding flex flex-col">
              <svg class="w-[60px] h-[60px] border-b-2 border-[#ccc]" viewBox="0 0 60 58"><path d="M19 34h24M31 23v22" stroke="#000" stroke-width="5.500"/></svg>
              <svg class="w-[60px] h-[60px]" viewBox="0 0 60 60"><path d="M19 34.500h24" stroke="#000" stroke-width="5.500"/></svg>
            </div>
            <div class="w-[68px] rounded-[8px] border-4 border-black/20 bg-white bg-clip-padding flex flex-col text-[#5b5b5b]">
              <svg class="w-[60px] h-[60px] border-b-2 border-[#ccc]" viewBox="0 0 60 58" fill="currentColor"><path fill-rule="evenodd" d="M31 12.500C23.500 12.500 19 18 19 25C19 33 26 38.500 31 44.500C36 38.500 43 33 43 25C43 18 38.500 12.500 31 12.500ZM31 19.500a5.200 5.200 0 1 1 0 10.400a5.200 5.200 0 1 1 0-10.400Z"/></svg>
              <svg class="w-[60px] h-[60px] border-b-2 border-[#ccc]" viewBox="0 0 60 58" fill="none" stroke="currentColor" stroke-width="3"><path d="M21 38l16.500-16.500"/><circle cx="18" cy="40.700" r="4.200"/><circle cx="40.300" cy="18.700" r="4.200"/></svg>
              <svg class="w-[60px] h-[60px] border-b-2 border-[#ccc]" viewBox="0 0 60 58" fill="none" stroke="currentColor" stroke-width="3"><path d="M22 17h16M22 40.500h16M18.500 21v15.500M41.500 21v15.500"/><circle cx="18" cy="17" r="4.200"/><circle cx="41.700" cy="17" r="4.200"/><circle cx="18" cy="40.400" r="4.200"/><circle cx="41.700" cy="40.400" r="4.200"/></svg>
              <svg class="w-[60px] h-[60px]" viewBox="0 0 60 60" fill="none" stroke="currentColor" stroke-width="3"><path d="M20.500 39.500l18.500-19M42.500 22v16.500M21.500 42.600h16.500"/><circle cx="17.300" cy="42.600" r="4.200"/><circle cx="42.300" cy="17.600" r="4.200"/><circle cx="42.300" cy="42.600" r="4.200"/></svg>
            </div>
            <div class="w-[68px] rounded-[8px] border-4 border-black/20 bg-white bg-clip-padding flex flex-col text-[#5b5b5b]">
              <svg class="w-[60px] h-[60px] border-b-2 border-[#ccc]" viewBox="0 0 60 58" fill="none" stroke="currentColor" stroke-width="2.800"><path d="M11 27.500L23.500 18.500M31.500 14Q36 11.500 42 11"/><circle cx="27.300" cy="16.500" r="4"/><path fill="currentColor" stroke="none" d="M28 18L44.500 34.500 38.500 35.500 41 43 36.800 44.800 33.800 37.500 28.500 42Z"/></svg>
              <svg class="w-[60px] h-[60px] border-b-2 border-[#ccc]" viewBox="0 0 60 58" fill="currentColor"><path d="M30 9.500l7.700 9h-6.200v8.800h8.500v-6.200l9 7.700-9 7.700v-6.200h-8.500v8.800h6.200L30 48l-7.700-9h6.200v-8.700h-8.500v6.200l-9-7.700 9-7.700v6.200h8.500v-8.800h-6.200z"/></svg>
              <svg class="w-[60px] h-[60px] border-b-2 border-[#ccc]" viewBox="0 0 60 58" fill="none" stroke="currentColor" stroke-width="2.800"><circle cx="17.500" cy="31.500" r="4.200"/><circle cx="31.700" cy="42.300" r="4.200"/><path fill="currentColor" stroke="none" d="M33.500 10.500L32.500 26 48.300 22.500V25L33 33.500 31 38H29L29.500 34H21.500V31L26.500 30 30 12Z"/></svg>
              <svg class="w-[60px] h-[60px] border-b-2 border-[#ccc]" viewBox="0 0 60 58" fill="none" stroke="currentColor" stroke-width="2.800" stroke-linejoin="round"><path d="M24.500 21.500L14.500 34.500 22.500 43H30L37.500 33.500M22 43.300H48"/><path fill="currentColor" d="M24.500 21.500L34 13.500 46.500 23.500 38 32.500Z"/></svg>
              <svg class="w-[60px] h-[60px]" viewBox="0 0 60 60" fill="currentColor"><path d="M23 16.500C9.500 20 9 36 17 42.500C25 48.500 38 47 44 39.500C48.500 33 48 26 44 20L48 14H32.500L33.500 28.500L38.500 23.500C42 29 41.500 35 37 39C31 43.500 22.500 42.500 18 36.500C14 30 15 21 23 18.500Z"/></svg>
            </div>
          </div>

          <div class="absolute right-0 bottom-0 h-[34px] w-[677px] bg-white/80 flex items-center justify-between pl-[10px] pr-[11px] pt-[2px] font-['Inter',sans-serif] text-[24px] tracking-normal text-[#3079a8] whitespace-nowrap">
            <svg class="w-[24px] h-[16px] shrink-0 -mt-[2px]" viewBox="0 0 24 16"><path fill="#4c7be1" d="M0 0h24v8H0z"/><path fill="#f6cf35" d="M0 8h24v8H0z"/></svg>
            <span>Leaflet</span><span class="text-[#333]">|</span><span>© MapTiler</span><span class="text-[#333]">|</span><span>© OpenStreetMap</span><span class="text-[#333]">|</span><span>© Nominatim</span>
          </div>
        </div>

        <div class="mt-[27px] h-[71px] border-b-2 border-[#e0e0e0] flex items-center justify-between pt-[4px]">
          <h3 class="text-[36px] font-medium tracking-[0px]">Location Details</h3>
          <svg class="size-12" viewBox="0 0 24 24" fill="#757575"><path d="M12 8l-6 6 1.410 1.410L12 10.830l4.590 4.580L18 14z"/></svg>
        </div>
        <div class="mt-[49px] flex">
          <div class="w-[526px] pt-[17px] font-medium tracking-[0.65px]">Name <span class="text-[#2b66c2]">*</span></div>
          <div class="grow h-[81px] border-2 border-[#c4c4c4] rounded-[8px] flex items-center pl-[26px] pb-px tracking-[0.3px]">Location 1</div>
        </div>
        <div class="mt-[32px] h-[56px] flex">
          <div class="w-[526px] pt-[17px] font-medium tracking-[0.65px]">Color <span class="text-[#2b66c2]">*</span></div>
          <div class="flex gap-4">
            <span class="size-[56px] rounded-[6px] bg-[#9fc968]"></span>
            <span class="size-[56px] rounded-[6px] bg-[#555555]"></span>
            <span class="size-[56px] rounded-[6px] bg-[#335b93]"></span>
            <span class="size-[56px] rounded-[6px] bg-[#6eb5e6]"></span>
            <span class="size-[56px] rounded-[6px] bg-[#dd4496]"></span>
            <span class="size-[56px] rounded-[6px] bg-[#d6494f]"></span>
            <span class="size-[56px] rounded-[6px] bg-[#ee9748]"></span>
            <span class="size-[56px] rounded-[6px] bg-[#70b567] shadow-[0_4px_8px_rgba(0,0,0,0.4)] flex items-center justify-center"><svg class="size-[32px]" viewBox="0 0 32 32" fill="none" stroke="#3c3c3c" stroke-width="2.800"><path d="M4 17l8 8L28 8"/></svg></span>
            <span class="size-[56px] rounded-[6px] bg-[#e2b266]"></span>
            <span class="size-[56px] rounded-[6px] bg-[#6abfb9]"></span>
          </div>
        </div>
        <div class="mt-[43px] flex">
          <div class="w-[526px]"></div>
          <div class="grow h-[80px] border-2 border-[#c4c4c4] rounded-[8px]"></div>
        </div>
      </section>
    </div>
  </main>
</div>
</body>
</html>
